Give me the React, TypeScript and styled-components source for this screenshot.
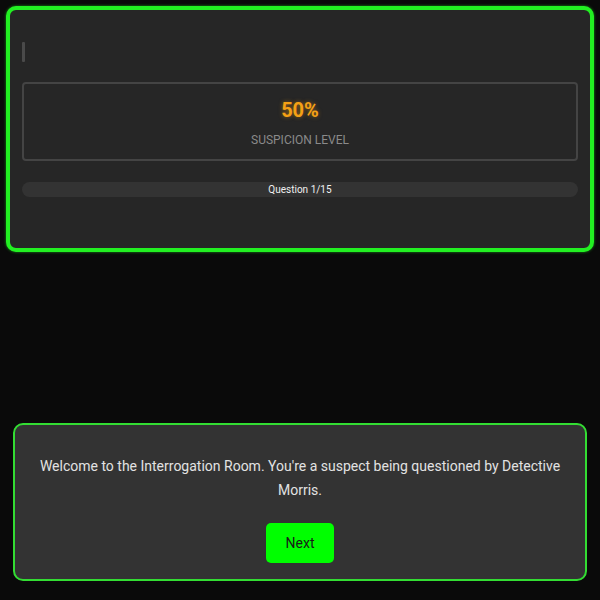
import React from "react";
import styled, { createGlobalStyle } from "styled-components";

const Global = createGlobalStyle`
  html, body { margin: 0; padding: 0; background: #0a0a0a; }
  body { font-family: Roboto, "Noto Sans", "Liberation Sans", sans-serif; }
  * { box-sizing: border-box; }
`;

const Page = styled.div`
  height: 600px;
  display: flex;
  flex-direction: column;
  background: #0a0a0a;
`;

const GamePanel = styled.section`
  margin: 6px 6px 0;
  height: 246px;
  border: 4px solid #22f022;
  border-radius: 10px;
  background: #262626;
  padding: 12px 12px;
  display: flex;
  flex-direction: column;
  box-shadow: 0 0 3px rgba(34, 240, 34, 0.6);
`;

const TypeLine = styled.div`
  height: 40px;
  padding-top: 20px;
  margin-bottom: 20px;
`;

const Cursor = styled.span`
  display: block;
  width: 3px;
  height: 20px;
  background: #4a4a4a;
  border-radius: 1px;
`;

const Meter = styled.div`
  border: 2px solid #444444;
  border-radius: 4px;
  padding: 14px 16px 11px;
  display: flex;
  flex-direction: column;
  align-items: center;
`;

const Percent = styled.div`
  font-size: 20px;
  line-height: 24px;
  font-weight: 700;
  color: #f5a115;
  text-shadow: 0 0 4px rgba(245, 161, 21, 0.5);
`;

const MeterLabel = styled.div`
  margin-top: 10px;
  font-size: 12px;
  line-height: 16px;
  color: #8a8a8a;
`;

const Progress = styled.div`
  margin-top: 21px;
  height: 15px;
  border-radius: 8px;
  background: #333333;
  display: flex;
  align-items: center;
  justify-content: center;
  font-size: 10px;
  color: #f0f0f0;
`;

const DialogPanel = styled.section`
  margin: auto 13px 19px;
  height: 158px;
  border: 2px solid #33dd33;
  border-radius: 10px;
  background: #333333;
  padding: 29px 20px 15px;
  display: flex;
  flex-direction: column;
  align-items: center;
`;

const DialogText = styled.p`
  margin: 0 0 21px;
  font-size: 14px;
  line-height: 24px;
  color: #e2e2e2;
  text-align: center;
`;

const NextButton = styled.button`
  width: 68px;
  height: 40px;
  border: none;
  border-radius: 5px;
  background: #00ff00;
  color: #1a1a1a;
  font-family: inherit;
  font-size: 14px;
  cursor: pointer;
`;

export default function App() {
  return (
    <>
      <Global />
      <Page>
        <GamePanel>
          <TypeLine>
            <Cursor />
          </TypeLine>
          <Meter>
            <Percent>50%</Percent>
            <MeterLabel>SUSPICION LEVEL</MeterLabel>
          </Meter>
          <Progress>Question 1/15</Progress>
        </GamePanel>
        <DialogPanel>
          <DialogText>
            Welcome to the Interrogation Room. You're a suspect being questioned by Detective Morris.
          </DialogText>
          <NextButton>Next</NextButton>
        </DialogPanel>
      </Page>
    </>
  );
}
